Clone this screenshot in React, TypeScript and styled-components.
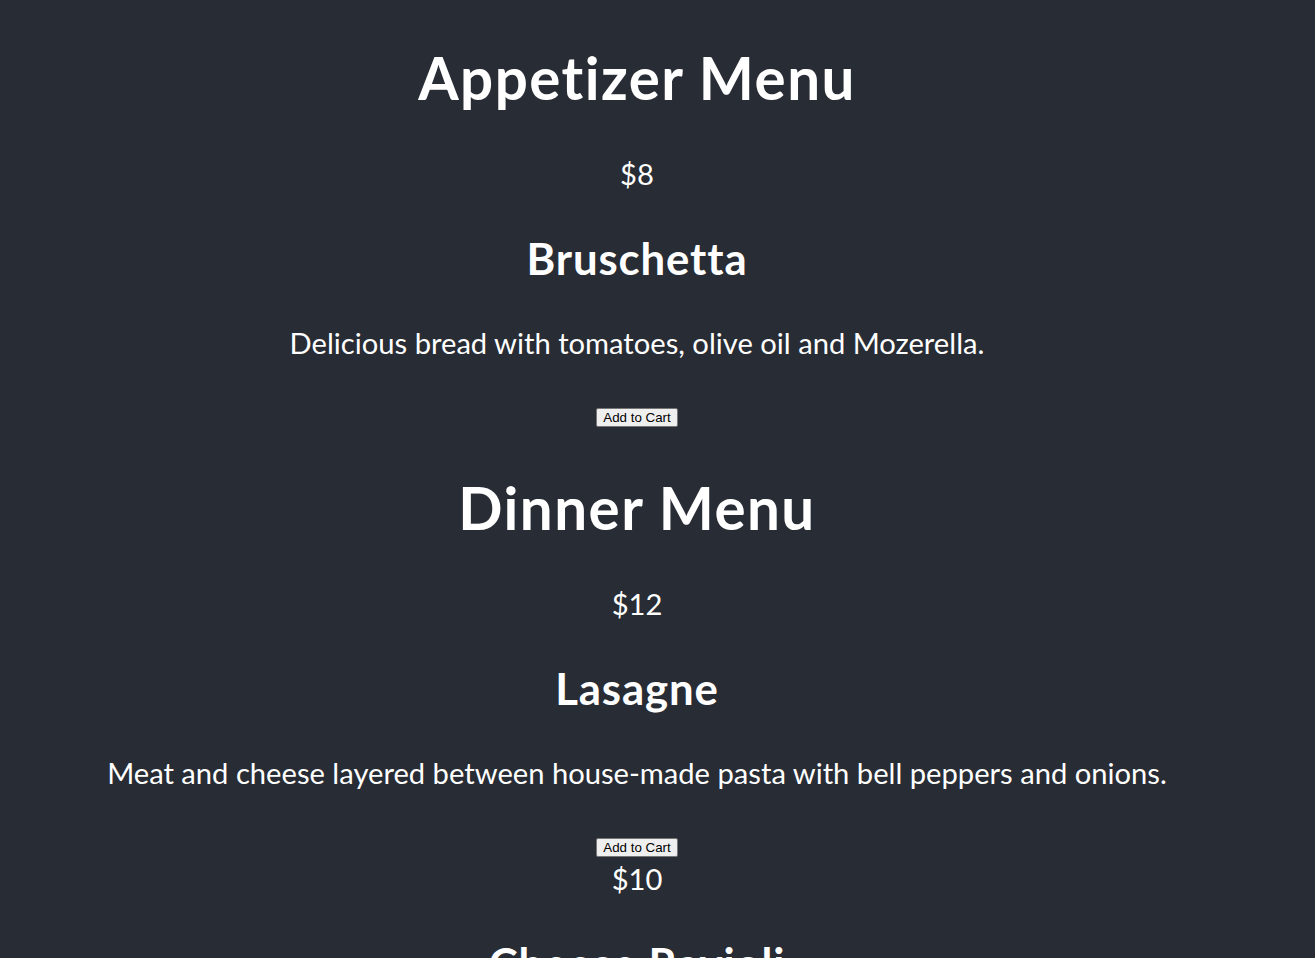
import React from 'react';
import styled, {createGlobalStyle} from "styled-components";

const menus = [
    {
        title: 'Appetizer Menu',
        items: [
            {price: 8, name: 'Bruschetta', description: 'Delicious bread with tomatoes, olive oil and Mozerella.'},
        ],
    },
    {
        title: 'Dinner Menu',
        items: [
            {price: 12, name: 'Lasagne', description: 'Meat and cheese layered between house-made pasta with bell peppers and onions.'},
            {price: 10, name: 'Cheese Ravioli', description: 'Ravioli stuffed with ricotta, parmesan and herbs in a tomato sauce.'},
        ],
    },
];

const GlobalStyle = createGlobalStyle`
  body {
    margin: 0;
    background: #282c34;
    font-family: Lato, "Open Sans", sans-serif;
  }
`

const Header = styled.header`
  min-height: 100vh;
  display: flex;
  flex-direction: column;
  align-items: center;
  text-align: center;
  color: #ffffff;
  background: #282c34;
  font-size: calc(10px + 2vmin);
  line-height: 1.32;
  padding-right: 41px;
`

const Title = styled.h1`
  font-size: 2em;
  font-weight: 700;
  letter-spacing: 0.025em;
  margin: 0.67em 0;
`

const Section = styled.section`
  display: block;
  width: 100%;
`

const Price = styled.p`
  margin: 0 0 1em;
`

const Name = styled.h2`
  font-size: 1.5em;
  font-weight: 700;
  letter-spacing: 0.02em;
  margin: 0.83em 0;
`

const Description = styled.p`
  margin: 1em 0;
`

const Actions = styled.div`
`

const CartButton = styled.button`
  font-family: "Liberation Sans", Arial, sans-serif;
  font-size: 13.333px;
  line-height: 15px;
  color: #000000;
  background: #efefef;
  border: 1px solid #767676;
  border-radius: 2px;
  padding: 1px 6px;
`

export default function App() {
    return (
        <>
            <GlobalStyle/>
            <Header>
                {menus.map(menu => (
                    <Section key={menu.title}>
                        <Title>{menu.title}</Title>
                        {menu.items.map(item => (
                            <div key={item.name}>
                                <Price>${item.price}</Price>
                                <Name>{item.name}</Name>
                                <Description>{item.description}</Description>
                                <Actions>
                                    <CartButton>Add to Cart</CartButton>
                                </Actions>
                            </div>
                        ))}
                    </Section>
                ))}
            </Header>
        </>
    );
}
